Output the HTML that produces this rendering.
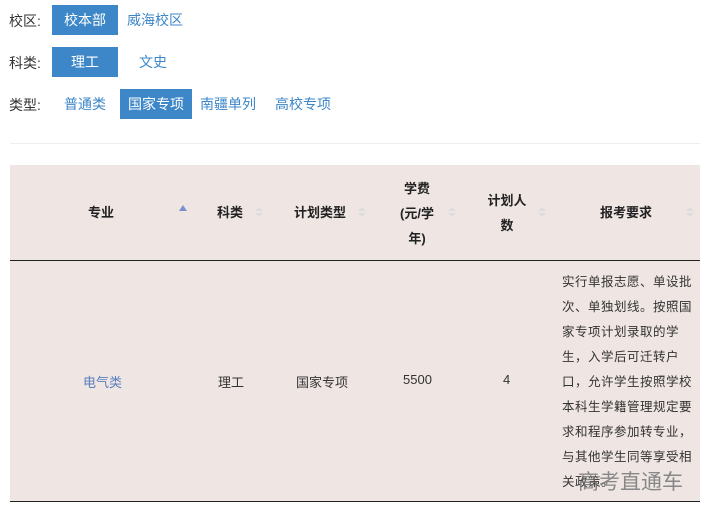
<!DOCTYPE html><html><head><meta charset="utf-8"><style>
body{margin:0;width:714px;height:519px;background:#fff;font-family:"Liberation Sans","Noto Sans CJK SC",sans-serif;font-size:13px;color:#333;position:relative;overflow:hidden}
.a{position:absolute;white-space:nowrap}
.btn{position:absolute;height:30px;line-height:30px;text-align:center;color:#3d87c8;font-size:14px}
.on{background:#3d87c8;color:#fff}
.lb{position:absolute;font-size:14px;color:#333}
.h{position:absolute;font-weight:bold;font-size:13px;color:#222;text-align:center;line-height:25px}
.ar{position:absolute;width:0;height:0;border-left:4px solid transparent;border-right:4px solid transparent}
</style></head><body>
<div class="lb" style="left:9px;top:11px">校区:</div>
<div class="btn on" style="left:52px;top:5px;width:66px">校本部</div>
<div class="btn" style="left:120px;top:5px;width:70px">威海校区</div>
<div class="lb" style="left:9px;top:53px">科类:</div>
<div class="btn on" style="left:52px;top:47px;width:66px">理工</div>
<div class="btn" style="left:120px;top:47px;width:66px">文史</div>
<div class="lb" style="left:9px;top:95px">类型:</div>
<div class="btn" style="left:55px;top:89px;width:60px">普通类</div>
<div class="btn on" style="left:120px;top:89px;width:72px">国家专项</div>
<div class="btn" style="left:195px;top:89px;width:66px">南疆单列</div>
<div class="btn" style="left:270px;top:89px;width:66px">高校专项</div>
<div class="a" style="left:10px;top:143px;width:690px;height:1px;background:#eee"></div>
<div class="a" style="left:10px;top:165px;width:690px;height:337px;background:#efe5e3"></div>
<div class="a" style="left:10px;top:260px;width:690px;height:1px;background:#222"></div>
<div class="a" style="left:10px;top:501px;width:690px;height:1px;background:#222"></div>
<div class="h" style="left:71px;top:200px;width:60px">专业</div>
<div class="ar" style="left:179px;top:205px;border-bottom:6px solid #7a8fcf"></div>
<div class="h" style="left:200px;top:200px;width:60px">科类</div>
<div class="h" style="left:280px;top:200px;width:80px">计划类型</div>
<div class="h" style="left:385px;top:176px;width:64px">学费<br>(元/学<br>年)</div>
<div class="h" style="left:477px;top:188px;width:60px">计划人<br>数</div>
<div class="h" style="left:586px;top:200px;width:80px">报考要求</div>
<div class="ar" style="left:255px;top:207px;border-bottom:4px solid #ddd"></div><div class="ar" style="left:255px;top:213px;border-top:4px solid #ddd"></div>
<div class="ar" style="left:358px;top:207px;border-bottom:4px solid #ddd"></div><div class="ar" style="left:358px;top:213px;border-top:4px solid #ddd"></div>
<div class="ar" style="left:448px;top:207px;border-bottom:4px solid #ddd"></div><div class="ar" style="left:448px;top:213px;border-top:4px solid #ddd"></div>
<div class="ar" style="left:538px;top:207px;border-bottom:4px solid #ddd"></div><div class="ar" style="left:538px;top:213px;border-top:4px solid #ddd"></div>
<div class="ar" style="left:686px;top:207px;border-bottom:4px solid #ddd"></div><div class="ar" style="left:686px;top:213px;border-top:4px solid #ddd"></div>
<div class="a" style="left:83px;top:372px;color:#5a7fbf">电气类</div>
<div class="a" style="left:218px;top:372px">理工</div>
<div class="a" style="left:296px;top:372px">国家专项</div>
<div class="a" style="left:403px;top:372px">5500</div>
<div class="a" style="left:503px;top:372px">4</div>
<div class="a" style="left:562px;top:270px;width:140px;white-space:normal;line-height:25px;font-size:12.5px;letter-spacing:0.5px">实行单报志愿、单设批次、单独划线。按照国家专项计划录取的学生，入学后可迁转户口，允许学生按照学校本科生学籍管理规定要求和程序参加转专业，与其他学生同等享受相关政策。</div>
<div class="a" style="left:578px;top:466px;font-size:21px;color:#777;opacity:.85">高考直通车</div>
</body></html>
